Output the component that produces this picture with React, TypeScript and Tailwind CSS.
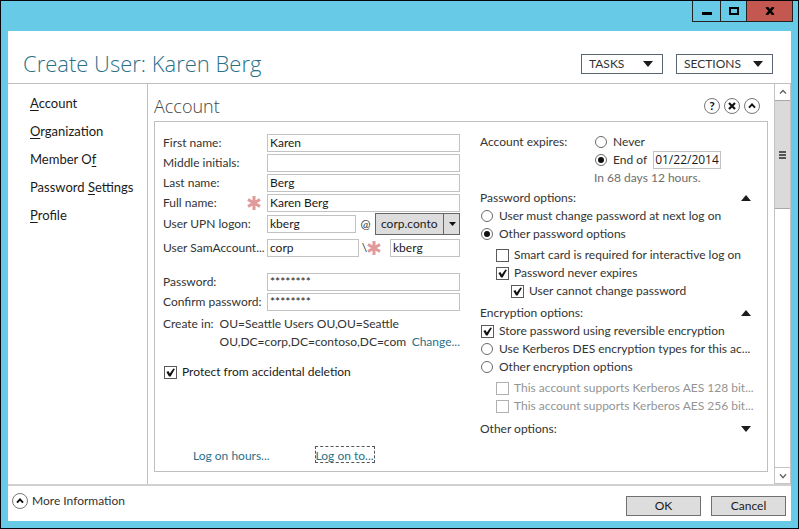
import { useId, useState, type ReactNode } from "react";

const field = "h-[18px] min-w-0 border border-[#c2c2c2] bg-white px-[2px] text-[#1a1a1a] outline-none";
const roundButton =
  "grid size-4 shrink-0 place-items-center rounded-full border border-[#777777] bg-white text-[#111111]";

function Triangle({ down = false }: { down?: boolean }) {
  return (
    <svg viewBox="0 0 10 6" className="h-[6px] w-[10px] shrink-0" fill="#1c1c1c" aria-hidden="true">
      <path d={down ? "M0 0h10L5 6z" : "M0 6h10L5 0z"} />
    </svg>
  );
}

function Chevron({ down = false, thin = false }: { down?: boolean; thin?: boolean }) {
  return (
    <svg viewBox="0 0 8 8" className="size-2" fill="none" stroke="currentColor" strokeWidth={thin ? 1.4 : 2} aria-hidden="true">
      <path d={down ? "M1 2.2 4 5.6 7 2.2" : "M1 5.6 4 2.4 7 5.6"} />
    </svg>
  );
}

function Required() {
  return (
    <svg viewBox="0 0 14 14" className="size-[14px] shrink-0" stroke="#e09a9a" strokeWidth="3" aria-label="Required">
      <path d="M7 0v14M1 3.5l12 7M13 3.5l-12 7" />
    </svg>
  );
}

function Check({
  label,
  checked = false,
  disabled = false,
  className = "",
}: {
  label: string;
  checked?: boolean;
  disabled?: boolean;
  className?: string;
}) {
  const [on, setOn] = useState(checked);
  return (
    <label className={`flex h-[18px] items-center gap-[5px] pl-[1px] whitespace-nowrap ${disabled ? "text-[#949494]" : ""} ${className}`}>
      <span className="grid size-[13px] shrink-0">
        <input
          type="checkbox"
          checked={on}
          disabled={disabled}
          onChange={() => setOn(!on)}
          className="peer col-start-1 row-start-1 size-[13px] appearance-none border border-[#5a5a5a] bg-white disabled:border-[#b0b0b0]"
        />
        <svg
          viewBox="0 0 13 13"
          className="pointer-events-none invisible col-start-1 row-start-1 size-[13px] peer-checked:visible"
          fill="#111111"
          aria-hidden="true"
        >
          <path d="M2.4 6 4.4 5 5.8 7.4 9.4 2.4 10.9 3 6.6 10.4 5 10.4z" />
        </svg>
      </span>
      <span>{label}</span>
    </label>
  );
}

function Radio({ label, name, checked = false }: { label: string; name: string; checked?: boolean }) {
  return (
    <label className="flex h-[18px] items-center gap-[6px] pl-[1px] whitespace-nowrap">
      <span className="grid size-[12px] shrink-0 place-items-center">
        <input
          type="radio"
          name={name}
          defaultChecked={checked}
          className="peer col-start-1 row-start-1 size-[12px] appearance-none rounded-full border border-[#6a6a6a] bg-white"
        />
        <span className="pointer-events-none invisible col-start-1 row-start-1 size-[6px] rounded-full bg-[#111111] peer-checked:visible" />
      </span>
      <span>{label}</span>
    </label>
  );
}

function Row({ label, value, required = false }: { label: string; value: string; required?: boolean }) {
  const id = useId();
  return (
    <div className="flex h-[18px] items-center">
      <div className="flex w-[104px] shrink-0 items-center justify-between pr-[6px]">
        <label htmlFor={id} className="whitespace-nowrap">{label}</label>
        {required && <Required />}
      </div>
      <input id={id} defaultValue={value} className={`${field} flex-1`} />
    </div>
  );
}

function GroupTitle({ children, down = false }: { children: ReactNode; down?: boolean }) {
  return (
    <button type="button" className="flex h-[18px] w-full items-center justify-between pr-[4px] text-left">
      <span>{children}</span>
      <Triangle down={down} />
    </button>
  );
}

function MenuButton({ children, className }: { children: ReactNode; className: string }) {
  return (
    <button
      type="button"
      className={`flex h-5 items-center justify-between border border-[#5b6570] bg-white pr-[9px] pl-[7px] text-[#333333] ${className}`}
    >
      <span>{children}</span>
      <Triangle down />
    </button>
  );
}

const links: [string, string, string][] = [
  ["", "A", "ccount"],
  ["", "O", "rganization"],
  ["Member O", "f", ""],
  ["Password ", "S", "ettings"],
  ["", "P", "rofile"],
];

export default function App() {
  return (
    <div className="flex min-h-screen flex-col border border-[#06060f] bg-[#67cbe8] px-[7px] pb-[7px] font-['Lato','Open_Sans',sans-serif] text-[12px] leading-[18px] text-[#333333]">
      <div className="-mr-[2px] flex h-[30px] shrink-0 items-start justify-end">
        <div className="flex h-[21px] border border-t-0 border-[#222222] text-black">
          <button type="button" aria-label="Minimize" className="grid w-[28px] place-items-center border-r border-[#222222]">
            <span className="mt-[5px] h-[3px] w-[10px] bg-black" />
          </button>
          <button type="button" aria-label="Maximize" className="grid w-[26px] place-items-center border-r border-[#222222]">
            <span className="h-[8px] w-[10px] border-2 border-black" />
          </button>
          <button type="button" aria-label="Close" className="grid w-[45px] place-items-center bg-[#c4574f]">
            <svg viewBox="0 0 10 8" className="h-2 w-[10px]" stroke="black" strokeWidth="2.6" aria-hidden="true">
              <path d="M1.5 0l7 8M8.500 0l-7 8" />
            </svg>
          </button>
        </div>
      </div>

      <div className="flex flex-1 flex-col bg-white">
        <header className="flex h-[53px] shrink-0 items-center justify-between border-b border-[#bfbfbf] pr-[18px] pl-[15px]">
          <h1 className="pt-[12px] font-['Open_Sans','Noto_Sans',sans-serif] text-[22px] leading-[32px] font-light text-[#2a7188]">
            Create User: Karen Berg
          </h1>
          <div className="flex gap-[13px] pt-[13px]">
            <MenuButton className="w-[82px]">TASKS</MenuButton>
            <MenuButton className="w-[97px]">SECTIONS</MenuButton>
          </div>
        </header>

        <div className="flex flex-1">
          <nav className="flex w-[140px] shrink-0 flex-col gap-[10px] border-r border-[#bfbfbf] pt-[10px] pl-[22px] text-[13px] text-[#1a1a1a]">
            {links.map(([before, key, after]) => (
              <a key={before + key} href="#" className="whitespace-nowrap">
                {before}
                <span className="underline underline-offset-2">{key}</span>
                {after}
              </a>
            ))}
          </nav>

          <main className="flex min-w-0 flex-1 flex-col pr-[6px] pb-[12px] pl-[6px]">
            <div className="flex h-[37px] items-center justify-between pr-[8px]">
              <h2 className="pt-[6px] font-['Open_Sans','Noto_Sans',sans-serif] text-[18px] leading-[24px] font-light text-[#444444]">
                Account
              </h2>
              <div className="flex gap-[4px] pt-[6px]">
                <button type="button" aria-label="Help" className={roundButton}>
                  <span className="text-[12px] leading-[14px] font-bold">?</span>
                </button>
                <button type="button" aria-label="Remove" className={roundButton}>
                  <svg viewBox="0 0 8 8" className="size-2" stroke="currentColor" strokeWidth="2.2" aria-hidden="true">
                    <path d="M1 1l6 6M7 1L1 7" />
                  </svg>
                </button>
                <button type="button" aria-label="Collapse" className={roundButton}>
                  <Chevron />
                </button>
              </div>
            </div>

            <form className="grid flex-1 grid-cols-[297px_minmax(0,1fr)] gap-x-[20px] border border-[#bfbfbf] pr-[12px] pl-[8px]">
              <div className="flex flex-col pt-[12px]">
                <div className="flex flex-col gap-[2px]">
                  <Row label="First name:" value="Karen" />
                  <Row label="Middle initials:" value="" />
                  <Row label="Last name:" value="Berg" />
                  <Row label="Full name:" value="Karen Berg" required />
                </div>
                <div className="mt-[1px] flex h-[22px] items-center">
                  <label htmlFor="upn" className="w-[104px] shrink-0 whitespace-nowrap">User UPN logon:</label>
                  <input id="upn" defaultValue="kberg" className={`${field} w-[89px]`} />
                  <span className="flex-1 text-center">@</span>
                  <div className="grid w-[85px] items-center">
                    <select
                      aria-label="UPN domain"
                      className="col-start-1 row-start-1 h-[22px] appearance-none border border-[#666666] bg-[#dddddd] pr-[16px] pl-[5px] text-[#1a1a1a] outline-none"
                    >
                      <option>corp.conto</option>
                    </select>
                    <span className="pointer-events-none col-start-1 row-start-1 grid h-[22px] w-[17px] place-items-center justify-self-end border-l border-[#666666]">
                      <svg viewBox="0 0 7 4" className="h-1 w-[7px]" fill="#111111" aria-hidden="true">
                        <path d="M0 0h7L3.5 4z" />
                      </svg>
                    </span>
                  </div>
                </div>
                <div className="mt-[4px] flex h-[18px] items-center">
                  <label htmlFor="sam" className="w-[104px] shrink-0 whitespace-nowrap">User SamAccount...</label>
                  <input id="sam" defaultValue="corp" className={`${field} w-[92px]`} />
                  <span className="flex flex-1 items-center justify-center pr-[6px]">
                    \<Required />
                  </span>
                  <input aria-label="Account name" defaultValue="kberg" className={`${field} w-[70px]`} />
                </div>
                <div className="mt-[16px] flex flex-col gap-[2px]">
                  <Row label="Password:" value="********" />
                  <Row label="Confirm password:" value="********" />
                </div>
                <div className="mt-[4px] flex gap-[6px] whitespace-nowrap">
                  <span>Create in:</span>
                  <div className="flex-1">
                    <p>OU=Seattle Users OU,OU=Seattle</p>
                    <p className="flex justify-between">
                      OU,DC=corp,DC=contoso,DC=com
                      <a href="#" className="text-[#2a7188]">Change...</a>
                    </p>
                  </div>
                </div>
                <Check label="Protect from accidental deletion" checked className="mt-[12px] text-[#1a1a1a]" />
                <div className="mt-auto mb-[6px] flex gap-[46px] pl-[30px] text-[#2a7188]">
                  <a href="#">Log on hours...</a>
                  <a href="#" className="h-[15px] leading-[18px] outline-1 outline-dashed outline-[#555555]">Log on to...</a>
                </div>
              </div>

              <div className="flex flex-col pt-[11px]">
                <div className="flex">
                  <span className="w-[114px] shrink-0">Account expires:</span>
                  <div>
                    <Radio name="expires" label="Never" />
                    <div className="flex h-[17px] items-center gap-[6px]">
                      <Radio name="expires" label="End of" checked />
                      <input
                        aria-label="Expiry date"
                        defaultValue="01/22/2014"
                        className="h-[18px] w-[68px] border border-[#c2c2c2] bg-white px-[1px] font-['Open_Sans','Noto_Sans',sans-serif] text-[#1a1a1a] outline-none"
                      />
                    </div>
                    <p className="mt-[1px] whitespace-nowrap text-[#6e6e6e]">In 68 days 12 hours.</p>
                  </div>
                </div>
                <div className="mt-[2px]">
                  <GroupTitle>Password options:</GroupTitle>
                  <Radio name="password" label="User must change password at next log on" />
                  <Radio name="password" label="Other password options" checked />
                  <Check label="Smart card is required for interactive log on" className="mt-[3px] ml-[15px]" />
                  <Check label="Password never expires" checked className="ml-[15px]" />
                  <Check label="User cannot change password" checked className="ml-[30px]" />
                </div>
                <div className="mt-[4px]">
                  <GroupTitle>Encryption options:</GroupTitle>
                  <Check label="Store password using reversible encryption" checked />
                  <Radio name="encryption" label="Use Kerberos DES encryption types for this ac..." />
                  <Radio name="encryption" label="Other encryption options" />
                  <Check label="This account supports Kerberos AES 128 bit..." disabled className="mt-[3px] ml-[15px]" />
                  <Check label="This account supports Kerberos AES 256 bit..." disabled className="ml-[15px]" />
                </div>
                <div className="mt-[5px]">
                  <GroupTitle down>Other options:</GroupTitle>
                </div>
              </div>
            </form>
          </main>

          <div className="flex w-[17px] shrink-0 flex-col border border-t-0 border-[#c4c4c4] text-[#666666]">
            <button type="button" aria-label="Scroll up" className="grid h-[16px] place-items-center">
              <Chevron thin />
            </button>
            <div className="grid h-[109px] place-items-center border-y border-[#a8a8a8] bg-[#dadada]">
              <div className="flex flex-col gap-[1px]">
                <span className="h-[2px] w-[7px] bg-[#555555]" />
                <span className="h-[2px] w-[7px] bg-[#555555]" />
                <span className="h-[2px] w-[7px] bg-[#555555]" />
              </div>
            </div>
            <button type="button" aria-label="Scroll down" className="mt-auto grid h-[16px] place-items-center border-t border-[#c4c4c4]">
              <Chevron down thin />
            </button>
          </div>
        </div>

        <footer className="flex h-[37px] shrink-0 items-center justify-between border-t-2 border-[#d0d0d0] pr-[5px] pl-[4px]">
          <button type="button" className="flex items-center gap-[4px] pb-[6px]">
            <span className={roundButton}>
              <Chevron />
            </span>
            More Information
          </button>
          <div className="flex gap-[10px] pt-[5px] text-[#1a1a1a]">
            <button type="button" className="h-5 w-[75px] border border-[#707070] bg-[#dddddd]">OK</button>
            <button type="button" className="h-5 w-[75px] border border-[#707070] bg-[#dddddd]">Cancel</button>
          </div>
        </footer>
      </div>
    </div>
  );
}
